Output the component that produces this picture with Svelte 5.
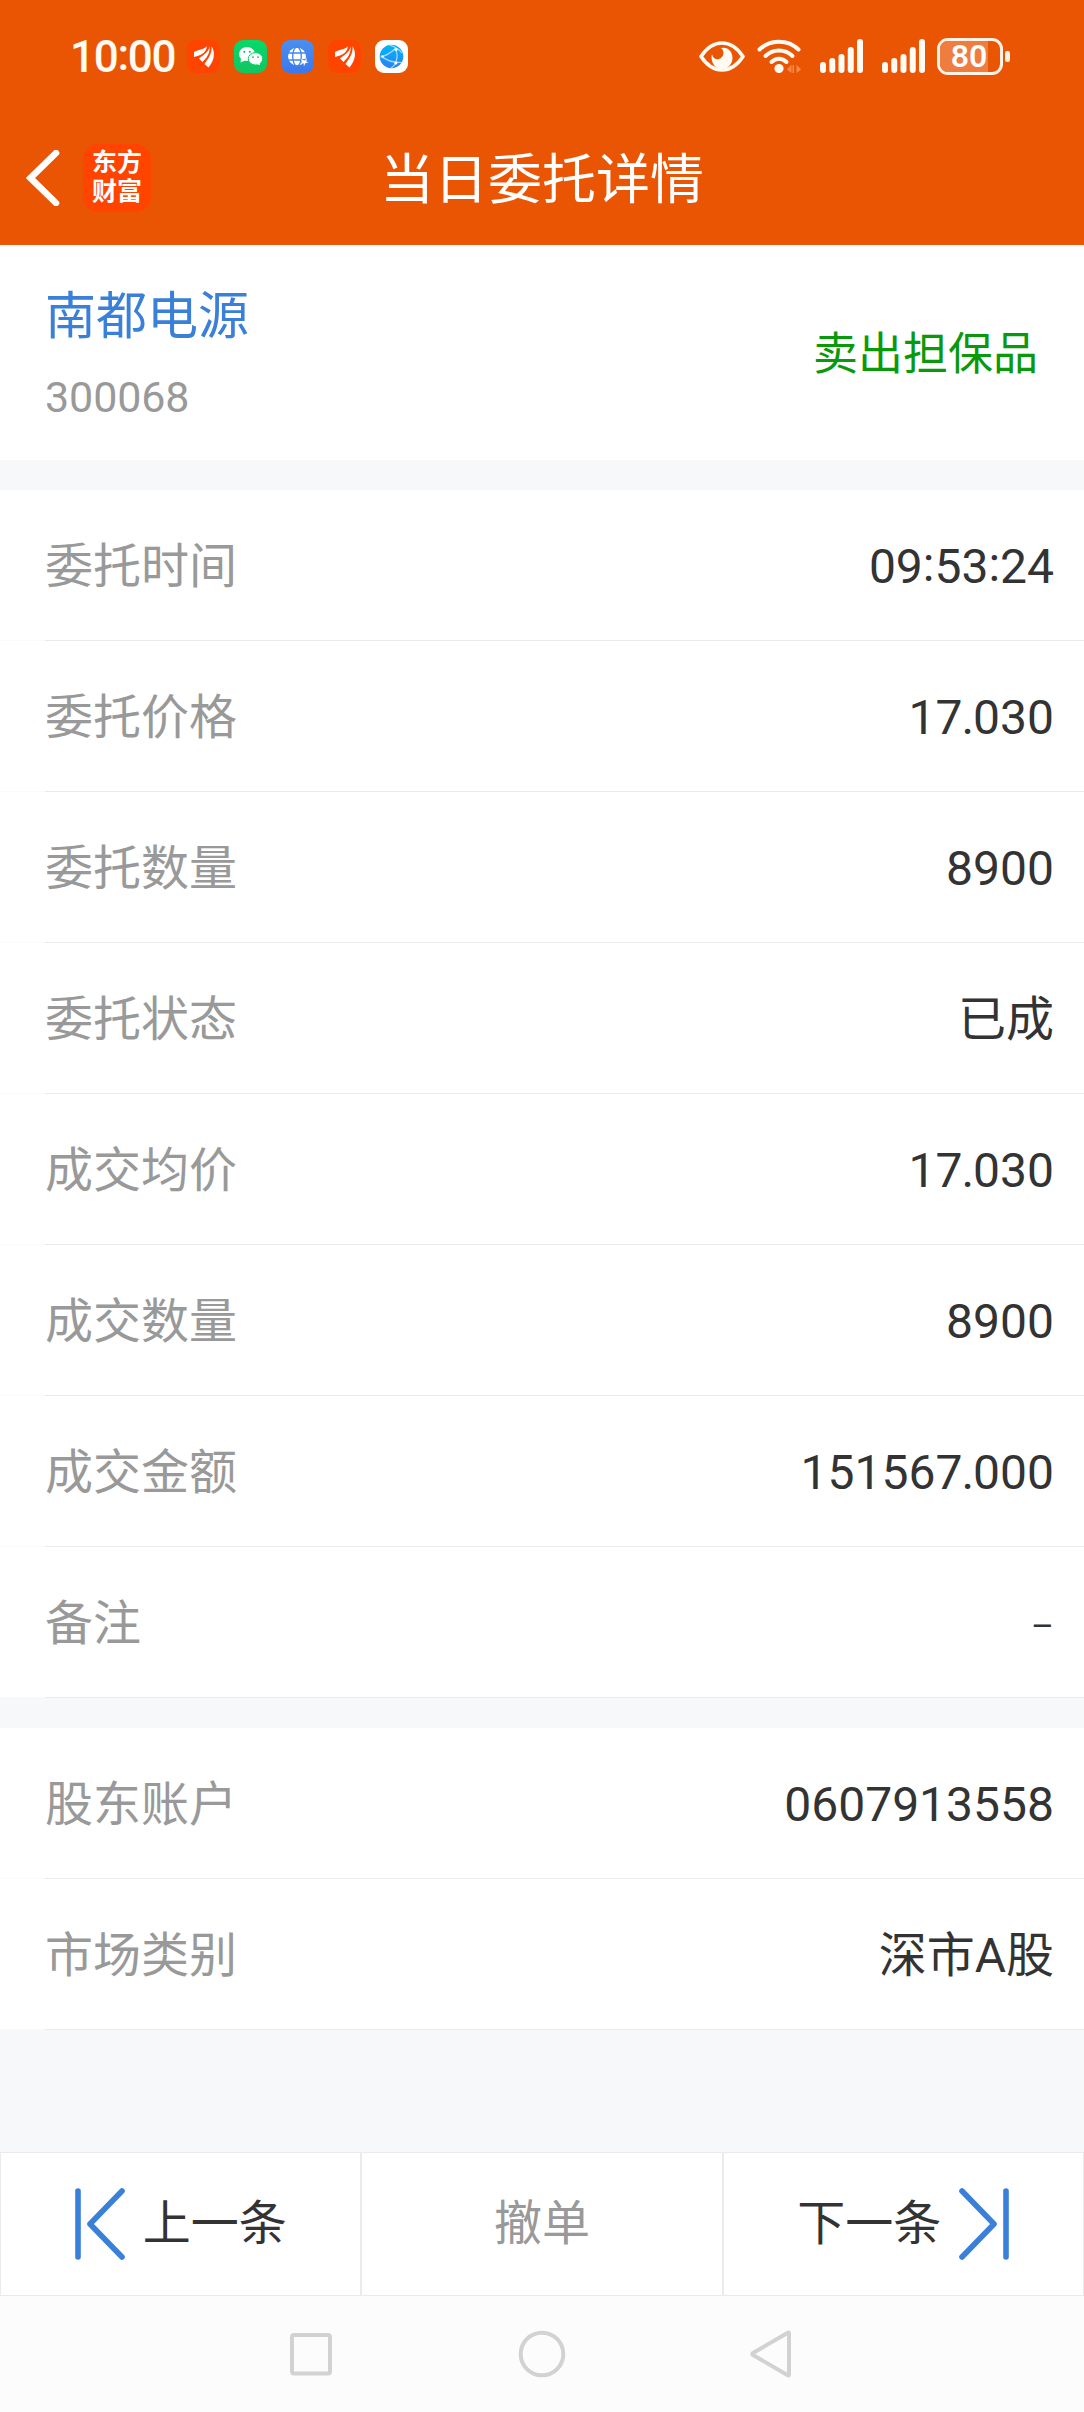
<script lang="ts">
	const orderRows = [
		{ label: '委托时间', value: '09:53:24' },
		{ label: '委托价格', value: '17.030' },
		{ label: '委托数量', value: '8900' },
		{ label: '委托状态', value: '已成' },
		{ label: '成交均价', value: '17.030' },
		{ label: '成交数量', value: '8900' },
		{ label: '成交金额', value: '151567.000' },
		{ label: '备注', value: '–' }
	];

	const accountRows = [
		{ label: '股东账户', value: '0607913558' },
		{ label: '市场类别', value: '深市A股' }
	];

	// heights of the five signal bars
	const bars = [11, 15, 19, 26, 34];

	const marks = { ':': 'colon', '.': 'dot', '–': 'dash' };
</script>

{#snippet feather()}
	<svg class="app-icon" viewBox="0 0 33 33">
		<rect width="33" height="33" rx="9" fill="#ff4400" />
		<g fill="#fff">
			<path d="M20 6C17 9.500 13 9 7 12V17C11 15.500 19 15 20 6Z" />
			<path d="M22.500 6C22 12 17 14.500 12 18.500L15.500 22C19 18.500 23.500 13.500 22.500 6Z" />
			<path d="M24.500 6C25.500 13 21 19 17.500 24L21.500 27.500C26 22 29.500 14 24.500 6Z" />
		</g>
	</svg>
{/snippet}

{#snippet signal()}
	<svg class="signal" viewBox="0 0 43 34">
		{#each bars as h, i}
			<rect x={i * 9.25} y={34 - h} width="6" height={h} rx="3" fill="#fffaf2" />
		{/each}
	</svg>
{/snippet}

{#snippet figure(text)}
	{#each text.split(/([:.–])/) as part}{#if marks[part]}<span class={marks[part]}>{part}</span>{:else}{part}{/if}{/each}
{/snippet}

{#snippet list(rows)}
	<div class="list">
		{#each rows as row}
			<div class="row">
				<span class="label">{row.label}</span>
				<span class="value">{@render figure(row.value)}</span>
			</div>
		{/each}
	</div>
{/snippet}

<div class="screen">
	<header>
		<div class="status">
			<span class="clock">{@render figure('10:00')}</span>
			<div class="apps">
				{@render feather()}
				<svg class="app-icon" viewBox="0 0 33 33">
					<defs>
						<linearGradient id="green" x1="0" y1="0" x2="0" y2="1">
							<stop offset="0" stop-color="#06d96b" />
							<stop offset="1" stop-color="#12c560" />
						</linearGradient>
					</defs>
					<rect width="33" height="33" rx="9" fill="url(#green)" />
					<path d="M7 18L6.500 22.500L11 20.500Z" fill="#fff" />
					<ellipse cx="13" cy="14" rx="8" ry="7" fill="#fff" />
					<circle cx="10.300" cy="11.800" r="1.100" fill="#0ccf66" />
					<circle cx="15.800" cy="11.800" r="1.100" fill="#0ccf66" />
					<ellipse cx="21.500" cy="18.800" rx="7.200" ry="6.200" fill="#fff" stroke="#0ccf66" />
					<path d="M22 24L26 25L25.500 22Z" fill="#fff" />
					<circle cx="19" cy="17.200" r="0.900" fill="#0ccf66" />
					<circle cx="24" cy="17.200" r="0.900" fill="#0ccf66" />
				</svg>
				<svg class="app-icon" viewBox="0 0 33 33">
					<defs>
						<linearGradient id="blue" x1="0" y1="0" x2="0" y2="1">
							<stop offset="0" stop-color="#4a90ee" />
							<stop offset="1" stop-color="#3a78ec" />
						</linearGradient>
					</defs>
					<rect width="33" height="33" rx="9" fill="url(#blue)" />
					<circle cx="16" cy="16.500" r="9" fill="#fff" />
					<g fill="none" stroke="#4285ee" stroke-width="1.300">
						<ellipse cx="16" cy="16.500" rx="4.300" ry="9.500" />
						<path d="M6 13H26M6 20H26" />
					</g>
					<path d="M20.500 19H28V27H20.500Z" fill="#3f80ed" />
					<path d="M20 19L24 20.500L25.500 17.500V21.500L27.500 22.500L24.500 23L23 26L22.500 23L19.500 25L21 22Z" fill="#fff" />
				</svg>
				{@render feather()}
				<svg class="app-icon" viewBox="0 0 33 33">
					<defs>
						<linearGradient id="sky" x1="0" y1="0" x2="0" y2="1">
							<stop offset="0" stop-color="#00b7f8" />
							<stop offset="1" stop-color="#2b80f5" />
						</linearGradient>
					</defs>
					<rect width="33" height="33" rx="9" fill="#fff" />
					<circle cx="16.500" cy="16.500" r="11.800" fill="url(#sky)" />
					<g fill="none" stroke="#a9dcff" stroke-width="1.200">
						<path d="M5.500 17C10 16 15.500 13 20.500 8.500" />
						<path d="M14.500 5C19 6.500 24 9 27 13" />
						<path d="M20.500 9.500C22.500 13 22.500 18 20.500 23" />
						<path d="M6.500 16C10 20 15 22.500 27.500 22.500" />
						<path d="M21 23C19.500 25 18 27 16 28" />
					</g>
					<circle cx="21" cy="9.500" r="1.600" fill="#fff" />
					<circle cx="7.500" cy="16.500" r="1.300" fill="#fff" />
					<circle cx="20.800" cy="23" r="1.600" fill="#fff" />
				</svg>
			</div>
			<div class="system">
				<svg class="eye" viewBox="0 0 46 31">
					<path
						d="M2 15.500C8 6.500 15 2 23 2S38 6.500 44 15.500C38 24.500 31 29 23 29S8 24.500 2 15.500Z"
						fill="none"
						stroke="#fffaf2"
						stroke-width="3.600"
						stroke-linejoin="round"
					/>
					<path
						d="M23 7C29 6 33.500 11 33.500 17C33.500 23 29 28 23 28S12.500 23 12.500 16C12.500 15 12.700 14 13 13.500C14 17 17 19 20 18C25 16.500 26 10 22 7Z"
						fill="#fffaf2"
					/>
				</svg>
				<svg class="wifi" viewBox="0 0 44 34">
					<g fill="none" stroke="#fffaf2" stroke-width="4" stroke-linecap="round">
						<path d="M2.500 10.500C13 0 31 0 41.500 10.500" />
						<path d="M8.500 17C16 9.500 28 9.500 35.500 17" />
						<path d="M14.500 23C19 18.500 25 18.500 29.500 23" />
					</g>
					<circle cx="22" cy="29.500" r="4.600" fill="#fffaf2" />
					<path d="M30 30.500L34.500 25.500V34Z M44 30.500L39.500 34V25.500Z M35.500 26H37V34H35.500Z" fill="#f58a4b" />
				</svg>
				{@render signal()}
				{@render signal()}
				<div class="battery">
					<div class="charge"></div>
					<span>80</span>
				</div>
				<div class="cap"></div>
			</div>
		</div>

		<div class="titlebar">
			<div class="left">
				<svg class="back" viewBox="0 0 34 56">
					<path
						d="M30 3L4.500 28L30 53"
						fill="none"
						stroke="#fff"
						stroke-width="6.600"
						stroke-linecap="round"
						stroke-linejoin="miter"
					/>
				</svg>
				<div class="brand">东方<br />财富</div>
			</div>
			<h1>当日委托详情</h1>
		</div>
	</header>

	<section class="stock">
		<div>
			<div class="name">南都电源</div>
			<div class="code">300068</div>
		</div>
		<span class="side">卖出担保品</span>
	</section>

	{@render list(orderRows)}
	{@render list(accountRows)}

	<div class="actions">
		<button>
			<svg class="step" viewBox="0 0 50 72">
				<path d="M3 3V69M47 3L15 36L47 69" />
			</svg>
			上一条
		</button>
		<button class="disabled">撤单</button>
		<button>
			下一条
			<svg class="step" viewBox="0 0 50 72">
				<path d="M47 3V69M3 3L35 36L3 69" />
			</svg>
		</button>
	</div>

	<nav>
		<svg viewBox="0 0 48 48"><rect x="5" y="5" width="38" height="38.500" rx="2" /></svg>
		<svg viewBox="0 0 48 48"><circle cx="24" cy="24" r="21.300" /></svg>
		<svg viewBox="0 0 48 48"><path d="M40 3.500V44.500Q40 46 38.800 45.200L4 25Q2.600 24 4 23L38.800 2.800Q40 2 40 3.500Z" /></svg>
	</nav>
</div>

<style>
	:global(body) {
		margin: 0;
	}
	.screen {
		width: 1084px;
		height: 2412px;
		display: flex;
		flex-direction: column;
		background: #f6f8fa;
		color: #333;
		font-family: Roboto, 'Noto Sans CJK SC', sans-serif;
		font-size: 48px;
		overflow: hidden;
	}
	svg {
		display: block;
		flex: none;
	}
	.colon {
		position: relative;
		top: -0.05em;
	}
	.dot {
		margin: 0 -1px;
	}
	.dash {
		font-size: 35px;
	}

	header {
		height: 245px;
		background: #ea5504;
		color: #fff;
	}
	.status {
		display: flex;
		align-items: center;
		height: 112px;
		box-sizing: border-box;
		padding: 0 74px 0 70px;
	}
	.clock {
		width: 117px;
		padding-top: 2px;
		font-size: 44px;
		font-weight: 500;
		line-height: 110px;
		letter-spacing: -1.3px;
		white-space: nowrap;
		color: #fffaf2;
	}
	.apps {
		display: flex;
		gap: 14px;
	}
	.app-icon {
		width: 33px;
		height: 33px;
	}
	.system {
		display: flex;
		align-items: center;
		margin-left: auto;
	}
	.eye {
		width: 46px;
		height: 31px;
		margin-right: 12px;
	}
	.wifi {
		width: 44px;
		height: 34px;
		margin-right: 19px;
	}
	.signal {
		width: 43px;
		height: 34px;
		margin-right: 19px;
	}
	.signal + .battery {
		margin-left: -7px;
	}
	.battery {
		position: relative;
		box-sizing: border-box;
		width: 66px;
		height: 37px;
		border: 3px solid #fff3e6;
		border-radius: 11px;
		overflow: hidden;
		text-align: center;
		font-size: 32px;
		font-weight: 600;
		line-height: 31px;
	}
	.battery span {
		position: relative;
		left: -1px;
	}
	.charge {
		position: absolute;
		top: 0;
		bottom: 0;
		left: 0;
		width: 80%;
		background: #ee7d3f;
	}
	.cap {
		width: 5px;
		height: 11px;
		margin-left: 2px;
		border-radius: 2px;
		background: #fff3e6;
	}

	.titlebar {
		display: grid;
		grid-template-columns: 1fr auto 1fr;
		align-items: center;
		height: 131px;
	}
	.left {
		display: flex;
		align-items: center;
		padding-left: 26px;
	}
	.back {
		width: 34px;
		height: 56px;
	}
	.brand {
		width: 68px;
		height: 68px;
		box-sizing: border-box;
		margin-left: 23px;
		padding-top: 4px;
		border-radius: 15px;
		background: #ff4400;
		text-align: center;
		font-size: 25px;
		font-weight: 700;
		line-height: 29px;
	}
	h1 {
		margin: 0;
		padding-top: 6px;
		font-size: 54px;
		font-weight: 400;
		line-height: 80px;
	}

	.stock {
		display: flex;
		align-items: center;
		justify-content: space-between;
		height: 215px;
		box-sizing: border-box;
		padding: 4px 46px 0 45px;
		background: #fff;
	}
	.name {
		padding-top: 4px;
		font-size: 51px;
		line-height: 80px;
		color: #3a80d9;
	}
	.code {
		font-size: 43px;
		line-height: 80px;
		letter-spacing: -0.1px;
		color: #999;
	}
	.side {
		font-size: 45px;
		line-height: 60px;
		color: #0a990a;
	}

	.list {
		margin-top: 30px;
		background: #fff;
	}
	.row {
		display: flex;
		align-items: center;
		justify-content: space-between;
		height: 151px;
		box-sizing: border-box;
		padding: 4px 30px 1px 45px;
		background: linear-gradient(to right, #fafafa 45px, #ebebeb 45px) bottom / 100% 1px no-repeat;
		line-height: 80px;
	}
	.label {
		color: #999;
	}

	.actions {
		display: flex;
		height: 144px;
		margin-top: auto;
	}
	button {
		flex: 1;
		display: flex;
		align-items: center;
		justify-content: center;
		gap: 18px;
		padding: 0;
		border: 1px solid #ebebeb;
		background: #fff;
		font: inherit;
		line-height: 80px;
		color: #333;
	}
	.disabled {
		color: #999;
	}
	.step {
		width: 50px;
		height: 72px;
	}
	.step path {
		fill: none;
		stroke: #3a80d9;
		stroke-width: 5.6;
		stroke-linecap: round;
		stroke-linejoin: round;
	}

	nav {
		display: flex;
		align-items: center;
		justify-content: center;
		gap: 183px;
		height: 116px;
		background: #fcfcfc;
	}
	nav svg {
		width: 48px;
		height: 48px;
		fill: none;
		stroke: #d2d2d2;
		stroke-width: 4;
		stroke-linejoin: round;
	}
</style>
